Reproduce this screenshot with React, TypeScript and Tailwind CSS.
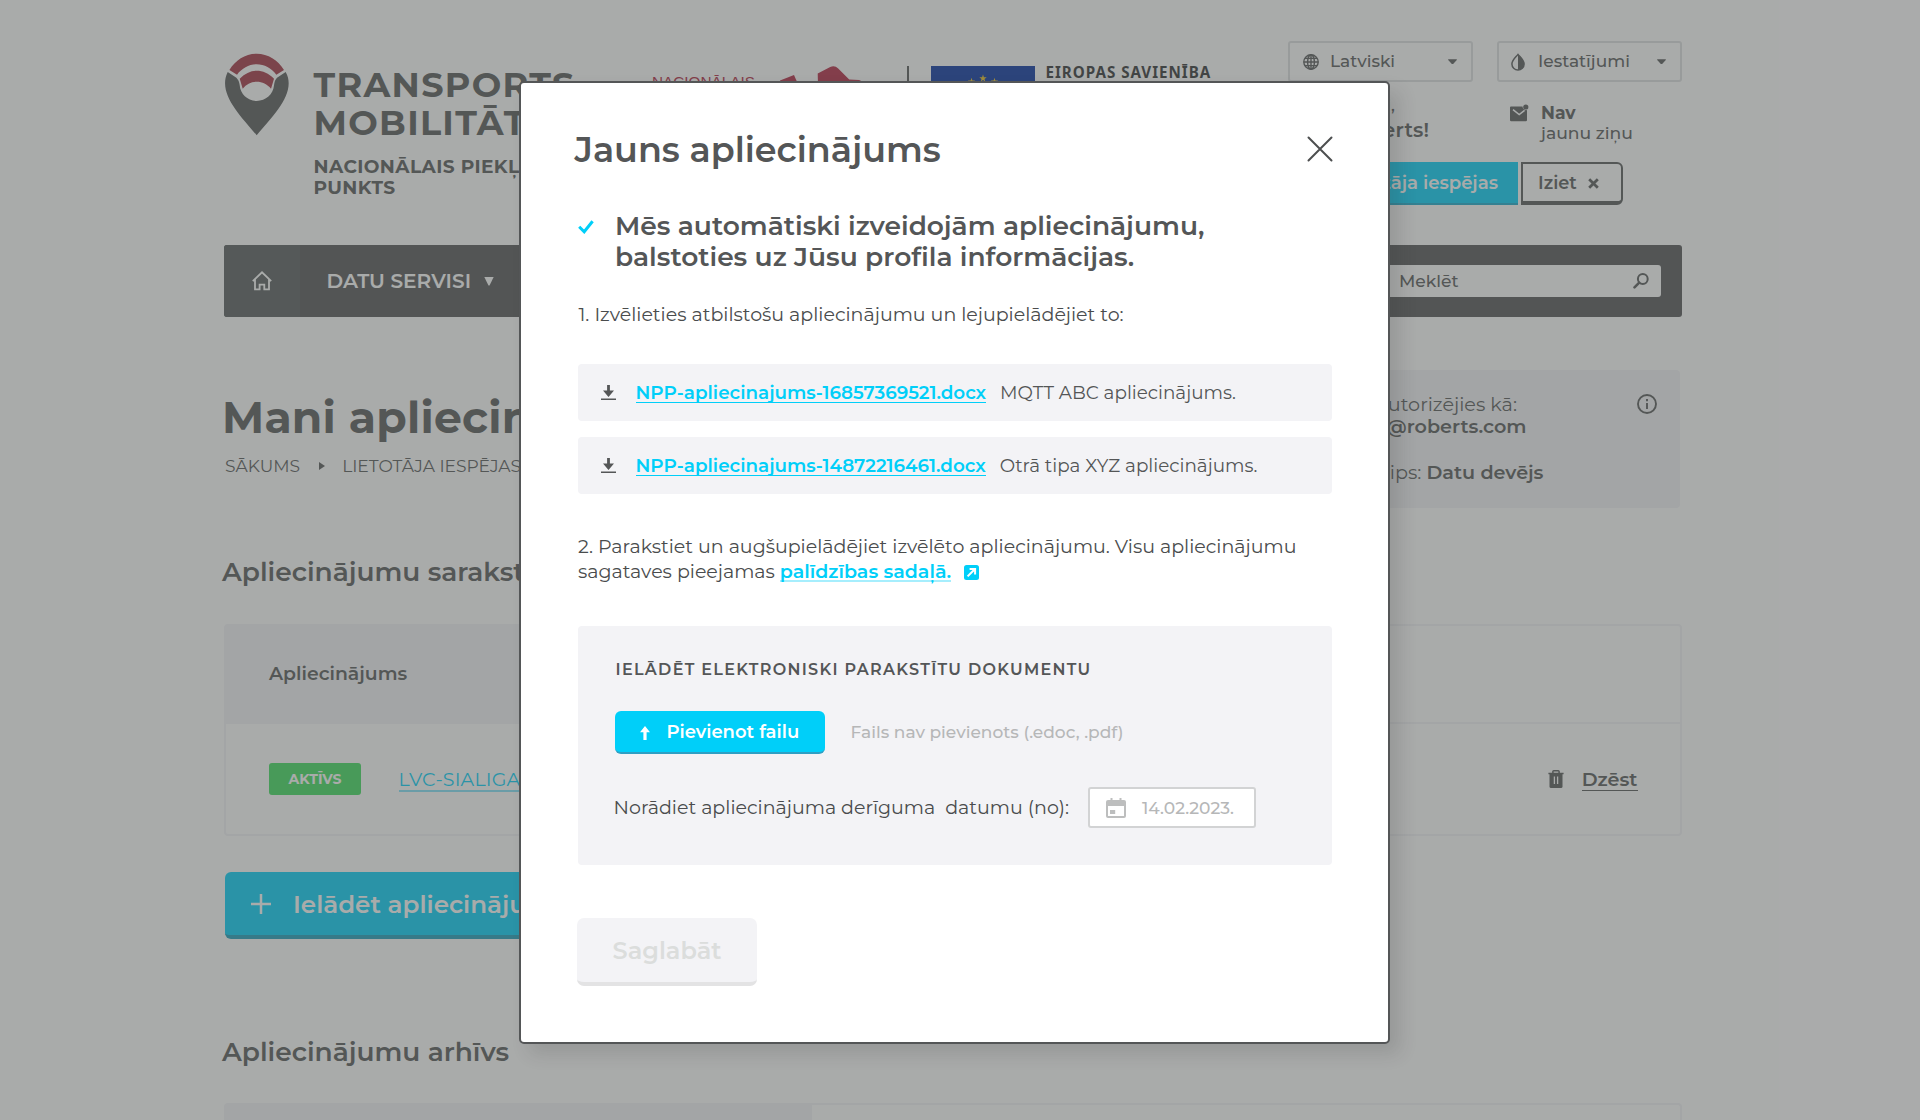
import type { ReactNode } from 'react';

function PinLogo() {
  return (
    <svg viewBox="72 69 196 248" className="h-[82.6px] w-[65.4px] shrink-0">
      <path fill="#a23040" d="M88 120C106 90 136 71 170 71C204 71 234 90 252 120L229 134C214 115 193 103 170 103C147 103 126 115 111 134Z" />
      <path fill="#a23040" d="M119 146C135 130 152 122 170 122C188 122 206 130 222 146L213 176C201 162 187 155 170 155C153 155 139 162 128 176Z" />
      <path fill="#545657" d="M83 126L109 143C114 148 118 155 119 166C121 193 143 213 170 213C197 213 220 193 222 166C223 155 226 148 231 143L257 126C264 138 266 149 266 160C266 212 214 264 170 316C126 264 75 212 75 160C75 149 77 138 83 126Z" />
    </svg>
  );
}

function Caret({ className = '' }: { className?: string }) {
  return (
    <svg viewBox="0 0 10 6" className={className} fill="currentColor">
      <path d="M.6.3h8.8a.5.5 0 0 1 .4.8L5.5 5.7a.7.7 0 0 1-1 0L.2 1.1a.5.5 0 0 1 .4-.8z" />
    </svg>
  );
}

function GlobeIcon() {
  return (
    <svg viewBox="0 0 16 16" className="size-[16px]" fill="none" stroke="currentColor" strokeWidth="1.4">
      <circle cx="8" cy="8" r="7.2" />
      <ellipse cx="8" cy="8" rx="3.4" ry="7.2" />
      <path d="M8 .8v14.4M.8 8h14.4M1.8 4.4h12.4M1.8 11.6h12.4" />
    </svg>
  );
}

function ContrastIcon() {
  return (
    <svg viewBox="0 0 14 18" className="h-[18px] w-[14px]" fill="none" stroke="currentColor" strokeWidth="1.5">
      <path d="M7 1.4C4.5 4.5.9 7.2.9 11a6.1 6 0 0 0 12.2 0C13.1 7.2 9.5 4.5 7 1.4z" />
      <path d="M7 1.4C9.5 4.5 13.1 7.2 13.1 11a6.1 6 0 0 1-6.1 6z" fill="currentColor" stroke="none" />
    </svg>
  );
}

function MailIcon() {
  return (
    <svg viewBox="0 0 19 18" className="h-[18px] w-[19px]">
      <path fill="currentColor" d="M1.5 2.5h11a3.6 3.6 0 0 0 4.5 3.5V16a1.2 1.2 0 0 1-1.2 1.2H1.2A1.2 1.2 0 0 1 0 16V3.7a1.2 1.2 0 0 1 1.5-1.2z" />
      <path d="M3 5.6l6.2 4.9 5.4-4.2" fill="none" stroke="#fff" strokeWidth="1.5" />
      <circle cx="15.8" cy="3" r="2.6" fill="currentColor" />
    </svg>
  );
}

function HomeIcon() {
  return (
    <svg viewBox="0 0 20 20" className="size-[20px]" fill="none" stroke="#fff" strokeWidth="1.8">
      <path d="M.8 10.2L10 1.3l9.2 8.9M3 8.6v9.7h4.6v-4.6h4.7v4.6H17V8.6" />
    </svg>
  );
}

function SearchIcon() {
  return (
    <svg viewBox="0 0 16 16" className="size-[16px]" fill="none" stroke="currentColor">
      <circle cx="9.8" cy="6" r="4.9" strokeWidth="2" />
      <path d="M6.2 9.6L1.5 14.3" strokeWidth="2.6" strokeLinecap="round" />
    </svg>
  );
}

function InfoIcon() {
  return (
    <svg viewBox="0 0 20 20" className="size-[20px] shrink-0" fill="none" stroke="currentColor" strokeWidth="1.9">
      <circle cx="10" cy="10" r="9" />
      <path d="M10 9v6M10 5v2.2" />
    </svg>
  );
}

function TrashIcon() {
  return (
    <svg viewBox="0 0 16 18" className="h-[18px] w-[16px]">
      <path d="M4.9 3V1.6a.8.8 0 0 1 .8-.8h4.6a.8.8 0 0 1 .8.8V3M.4 3.5h15.2" stroke="currentColor" strokeWidth="1.5" fill="none" />
      <path fill="currentColor" d="M1.5 3.5h13v13a1.5 1.5 0 0 1-1.5 1.5H3a1.5 1.5 0 0 1-1.5-1.5z" />
      <path d="M6.4 6.5v7.5M9.6 6.5v7.5" stroke="#fff" strokeWidth="1.3" />
    </svg>
  );
}

function DownloadIcon() {
  return (
    <svg viewBox="0 0 15 15" className="size-[15px] shrink-0" fill="#545657">
      <path d="M6.1 0h2.8v5.5H13L7.5 12 2 5.5h4.1zM0 13.6h15V15H0z" />
    </svg>
  );
}

function CalendarIcon() {
  return (
    <svg viewBox="0 0 20 20" className="size-[20px]" fill="#bdbebe">
      <path fillRule="evenodd" d="M4.5 0h2v2h7V0h2v2H18a2 2 0 0 1 2 2v14a2 2 0 0 1-2 2H2a2 2 0 0 1-2-2V4a2 2 0 0 1 2-2h2.5zM2 8v10h16V8z" />
      <path d="M4 12h5.2v4H4z" />
    </svg>
  );
}

function SelectBox({ icon, label, pad }: { icon: ReactNode; label: string; pad: string }) {
  return (
    <div className="flex h-[41px] w-[185px] items-center rounded-[3px] border-2 border-[#dddfe1]">
      <span className={pad}>{icon}</span>
      <span className="-mt-[1px] grow text-[17px] font-medium leading-[20px]">{label}</span>
      <Caret className="mr-[14px] h-[5.5px] w-[9px]" />
    </div>
  );
}

function EuLogos() {
  return (
    <div className="flex items-start pt-[64px]">
      <div className="w-[128px] pt-[9px] font-['Liberation_Sans'] text-[15.3px] leading-[18px] text-[#b22540]">NACIONĀLAIS</div>
      <svg viewBox="780 64 90 30" className="h-[30px] w-[90px]" fill="#b22540">
        <path d="M780 80.5l14-5.5 5 11.2-19 6z" />
        <path d="M817.7 73.5l12.5-6.5q4.5-2 8 1.5l11 11 10 .5 6 3v11h-47z" />
      </svg>
      <div className="ml-[37px] mt-[2px] h-[60px] w-[1.5px] bg-[#545657]" />
      <svg viewBox="0 0 104 70" className="ml-[22.5px] mt-[2px] h-[70px] w-[104px]">
        <rect width="104" height="70" fill="#0431a0" />
        {[[52, 12.3], [40.5, 15.5], [63.5, 15.5]].map(([x, y]) => (
          <path key={x} transform={`translate(${x} ${y})`} fill="#ecc020" d="M0-3.7l.9 2.6h2.8L1.5.6l.8 2.7L0 1.7l-2.3 1.6.8-2.7-2.2-1.7h2.8z" />
        ))}
      </svg>
      <div className="ml-[10.5px] pt-[0.5px] font-['Noto_Sans'] text-[15.2px] font-bold leading-[14px] tracking-[0.97px] text-[#2f3033]">EIROPAS SAVIENĪBA</div>
    </div>
  );
}

function Header() {
  return (
    <header className="flex h-[245px] shrink-0">
      <div className="w-[89.5px] shrink-0 pt-[53px]"><PinLogo /></div>
      <div className="w-[338.5px] shrink-0 pt-[66px] font-bold">
        <div className="text-[35px] leading-[38.3px] tracking-[1.3px]">TRANSPORTS<br />MOBILITĀTES</div>
        <div className="mt-[13px] text-[18.6px] leading-[21.4px] tracking-[0.4px]">NACIONĀLAIS PIEKĻUVES PUNKTS</div>
      </div>
      <div className="w-[636px] shrink-0"><EuLogos /></div>
      <div className="flex w-[394px] flex-col pt-[41px]">
        <div className="flex gap-[24px]">
          <SelectBox icon={<GlobeIcon />} label="Latviski" pad="ml-[12.5px] mr-[11.5px]" />
          <SelectBox icon={<ContrastIcon />} label="Iestatījumi" pad="ml-[12px] mr-[13px]" />
        </div>
        <div className="flex h-[80px] justify-end">
          <div className="w-[169px] pt-[12px]">
            <div className="text-[17px] font-medium leading-[22px]">Sveiki,</div>
            <div className="text-[20px] font-semibold leading-[28px] tracking-[0.2px]">Roberts!</div>
          </div>
          <div className="flex w-[172px] pt-[21px]">
            <div className="w-[31px] pt-[1px]"><MailIcon /></div>
            <div className="text-[17.2px] font-medium leading-[20px]"><b className="font-bold">Nav</b><br />jaunu ziņu</div>
          </div>
        </div>
        <div className="flex h-[43px] gap-[2.5px]">
          <div className="flex w-[230px] items-center justify-end border-b-2 border-[#14a9cc] bg-[#00cff9] pr-[20px] pt-[1px] text-[18.1px] font-semibold text-white">Lietotāja iespējas</div>
          <div className="flex w-[102.5px] items-center rounded-r-[6px] border-2 border-b-4 border-[#545657] pl-[15.5px] pt-[2px] text-[17.8px] font-semibold">
            Iziet
            <svg viewBox="0 0 12 12" className="ml-[11.5px] size-[11px]" stroke="currentColor" strokeWidth="3"><path d="M1.3 1.3l9.4 9.4M10.7 1.3l-9.4 9.4" /></svg>
          </div>
        </div>
      </div>
    </header>
  );
}

function NavBar() {
  return (
    <nav className="flex h-[72px] shrink-0 items-center rounded-[3px] bg-[#525255]">
      <div className="flex h-full w-[76px] items-center justify-center rounded-l-[3px] bg-[#565b5c]"><HomeIcon /></div>
      <div className="ml-[26.5px] text-[20.1px] font-semibold text-white">DATU SERVISI</div>
      <svg viewBox="0 0 10 9" className="ml-[13px] h-[9px] w-[10px]" fill="#fff"><path d="M.3 0h9.4L5.5 8.5h-1z" /></svg>
      <div className="ml-auto mr-[21px] flex h-[32px] w-[320px] items-center rounded-[3px] bg-white pr-[12px]">
        <span className="grow pl-[58px] text-[17.1px] font-medium">Meklēt</span>
        <SearchIcon />
      </div>
    </nav>
  );
}

function TitleRow() {
  return (
    <div className="flex h-[190.5px] shrink-0 justify-between">
      <div className="pt-[73px]">
        <h1 className="-ml-[2px] text-[44.2px] font-bold leading-[54px] tracking-[0.2px]">Mani apliecinājumi</h1>
        <div className="mt-[12px] flex items-center text-[17.1px] leading-[20px]">
          <span className="pl-[1px]">SĀKUMS</span>
          <svg viewBox="0 0 6 8" className="ml-[19px] mr-[17px] h-[8px] w-[6px]" fill="currentColor"><path d="M0 0l6 4-6 4z" /></svg>
          <span>LIETOTĀJA IESPĒJAS</span>
        </div>
      </div>
      <div className="mr-[2px] mt-[53px] flex h-[137.5px] w-[430px] rounded-[4px] bg-[#f3f3f6] pr-[23px] pt-[23px] text-[19.2px] leading-[22px]">
        <div className="grow text-right">
          <div className="pr-[120px]">Jūs autorizējies kā:</div>
          <div className="pr-[110.5px] font-semibold">roberts@roberts.com</div>
          <div className="mt-[24px] pr-[93.5px]">Lietotāja tips: <b className="font-semibold">Datu devējs</b></div>
        </div>
        <div className="pt-[1px]"><InfoIcon /></div>
      </div>
    </div>
  );
}

function Page() {
  return (
    <div className="ml-[224px] flex h-[1120px] w-[1458px] flex-col">
      <Header />
      <NavBar />
      <TitleRow />
      <h2 className="-ml-[2px] mt-[48.5px] shrink-0 text-[26.45px] font-semibold leading-[32px]">Apliecinājumu saraksts</h2>
      <div className="mt-[36px] h-[212px] shrink-0 rounded-[4px] border-2 border-[#f3f3f6]">
        <div className="flex h-[98px] border-b-2 border-[#f3f3f6]">
          <div className="flex w-[586px] items-center bg-[#f3f3f6] pl-[43px] pt-[1px] text-[18.85px] font-semibold">Apliecinājums</div>
        </div>
        <div className="flex h-[110px] items-center pl-[43px] pr-[42.5px]">
          <div className="flex h-[32px] w-[92px] items-center justify-center rounded-[3px] bg-[#3ddd5c] text-[14px] font-bold text-white">AKTĪVS</div>
          <div className="ml-[37.5px] mt-[2px] border-b-2 border-[#80e0f8] text-[19px] leading-[21px] tracking-[0.2px] text-[#00cff9]">LVC-SIALIGA-2023</div>
          <div className="ml-auto mr-[18px]"><TrashIcon /></div>
          <div className="mt-[1px] border-b border-[#545657] text-[19.2px] font-semibold leading-[21px]">Dzēst</div>
        </div>
      </div>
      <div className="ml-px mt-[35.5px] flex h-[67.5px] w-[420px] shrink-0 items-center rounded-[6px] border-b-4 border-[#1a9cba] bg-[#00cff9] pl-[25.5px] pt-[2px] text-[24.6px] font-semibold text-white">
        <svg viewBox="0 0 20 20" className="mr-[22.5px] size-[20px]" stroke="#fff" strokeWidth="2.5"><path d="M10 0v20M0 10h20" /></svg>
        Ielādēt apliecinājumu
      </div>
      <h2 className="-ml-[2px] mt-[96.5px] shrink-0 text-[26.45px] font-semibold leading-[32px]">Apliecinājumu arhīvs</h2>
      <div className="mt-[35.5px] h-[17px] shrink-0 rounded-t-[4px] border-2 border-b-0 border-[#f3f3f6]">
        <div className="h-full w-[586px] bg-[#f3f3f6]" />
      </div>
    </div>
  );
}

function FileRow({ file, note }: { file: string; note: string }) {
  return (
    <div className="flex h-[57px] items-center rounded-[4px] bg-[#f3f3f6] pl-[23px] text-[18.35px] leading-[20px]">
      <DownloadIcon />
      <span className="ml-[19.5px] mt-[1px] h-[20px] border-b border-[#00cff9] font-semibold text-[#00cff9]">{file}</span>
      <span className="ml-[14px] text-[#545657]">{note}</span>
    </div>
  );
}

function Modal() {
  return (
    <div className="ml-[519px] mt-[81px] h-[963px] w-[871px] rounded-[5px] border-2 border-[#545657] bg-white pl-[57px] pr-[56px] pt-[46px] shadow-[10px_10px_18px_rgba(40,44,42,0.14)]">
      <div className="flex h-[42px] items-start justify-between">
        <h1 className="-ml-[3.5px] text-[34.95px] font-semibold leading-[42px]">Jauns apliecinājums</h1>
        <svg viewBox="0 0 26 26" className="-mr-[1px] mt-[6.5px] size-[26px]" stroke="#4c4e4f" strokeWidth="2" strokeLinecap="round"><path d="M1.5 1.5l23 23M24.5 1.5l-23 23" /></svg>
      </div>
      <div className="mt-[40px] flex">
        <svg viewBox="0 0 16 14" className="mt-[9px] h-[14px] w-[16px]" fill="none" stroke="#00cff9" strokeWidth="3"><path d="M1.2 6.8l5 5L14.6 1.2" /></svg>
        <div className="ml-[21px] text-[26.5px] font-semibold leading-[30.7px]">Mēs automātiski izveidojām apliecinājumu,<br />balstoties uz Jūsu profila informācijas.</div>
      </div>
      <p className="ml-[0.5px] mt-[30px] whitespace-nowrap text-[19.03px] leading-[25px] text-[#4a4c4d]">1. Izvēlieties atbilstošu apliecinājumu un lejupielādējiet to:</p>
      <div className="mt-[36.6px] flex flex-col gap-[16px]">
        <FileRow file="NPP-apliecinajums-16857369521.docx" note="MQTT ABC apliecinājums." />
        <FileRow file="NPP-apliecinajums-14872216461.docx" note="Otrā tipa XYZ apliecinājums." />
      </div>
      <div className="mt-[40px] whitespace-nowrap text-[19.03px] leading-[25.2px] text-[#4a4c4d]">
        <div>2. Parakstiet un augšupielādējiet izvēlēto apliecinājumu. Visu apliecinājumu</div>
        <div className="flex">
          <span>sagataves pieejamas&nbsp;</span>
          <span className="h-[23px] border-b-2 border-[#00cff9]/35 font-semibold text-[#00cff9]">palīdzības sadaļā.</span>
          <svg viewBox="0 0 15 15" className="ml-[12.5px] mt-[5.5px] size-[15px]"><rect width="15" height="15" rx="2.5" fill="#00cff9" /><path d="M3.6 11.4l6.4-6.4M5.6 3.9h5.5v5.5" stroke="#fff" strokeWidth="2" fill="none" /></svg>
        </div>
      </div>
      <div className="mt-[42px] h-[239px] rounded-[4px] bg-[#f3f3f6] pl-[37px] pt-[34px]">
        <div className="ml-[0.5px] text-[16px] font-semibold leading-[20px] tracking-[1.3px]">IELĀDĒT ELEKTRONISKI PARAKSTĪTU DOKUMENTU</div>
        <div className="mt-[31px] flex h-[43px] items-center">
          <div className="flex h-[43px] w-[209.5px] items-center rounded-[6px] border-b-2 border-[#2e9fc4] bg-[#00cff9] pl-[25px] pt-[2px] text-[18px] font-semibold text-white">
            <svg viewBox="0 0 10 14" className="mr-[16.5px] h-[14px] w-[10px]" fill="#fff"><path d="M5 0l5 6.2H6.6V14H3.4V6.2H0z" /></svg>
            Pievienot failu
          </div>
          <span className="ml-[26px] text-[17.05px] font-medium text-[#b6b7b8]">Fails nav pievienots (.edoc, .pdf)</span>
        </div>
        <div className="mt-[33px] flex h-[41px] items-center">
          <span className="-ml-[1.5px] w-[474.5px] whitespace-pre text-[19.03px] text-[#4a4c4d]">{'Norādiet apliecinājuma derīguma  datumu (no):'}</span>
          <div className="flex h-[41px] w-[168px] items-center rounded-[3px] border-2 border-[#d2d3d4] bg-white pl-[16px]">
            <CalendarIcon />
            <span className="ml-[16px] text-[17.1px] font-medium text-[#b6b7b8]">14.02.2023.</span>
          </div>
        </div>
      </div>
      <div className="-ml-px mt-[53px] flex h-[68px] w-[180px] items-center justify-center rounded-[7px] border-b-4 border-[#e3e3e4] bg-[#f3f3f6] pt-[1px] text-[24px] font-semibold text-[#dbdddc]">Saglabāt</div>
    </div>
  );
}

export default function App() {
  return (
    <div className="relative h-[1120px] w-[1920px] overflow-hidden bg-white font-['Montserrat','Inter',sans-serif] text-[#545657]">
      <Page />
      <div className="absolute inset-0 flex items-start bg-[#545756]/50">
        <Modal />
      </div>
    </div>
  );
}
